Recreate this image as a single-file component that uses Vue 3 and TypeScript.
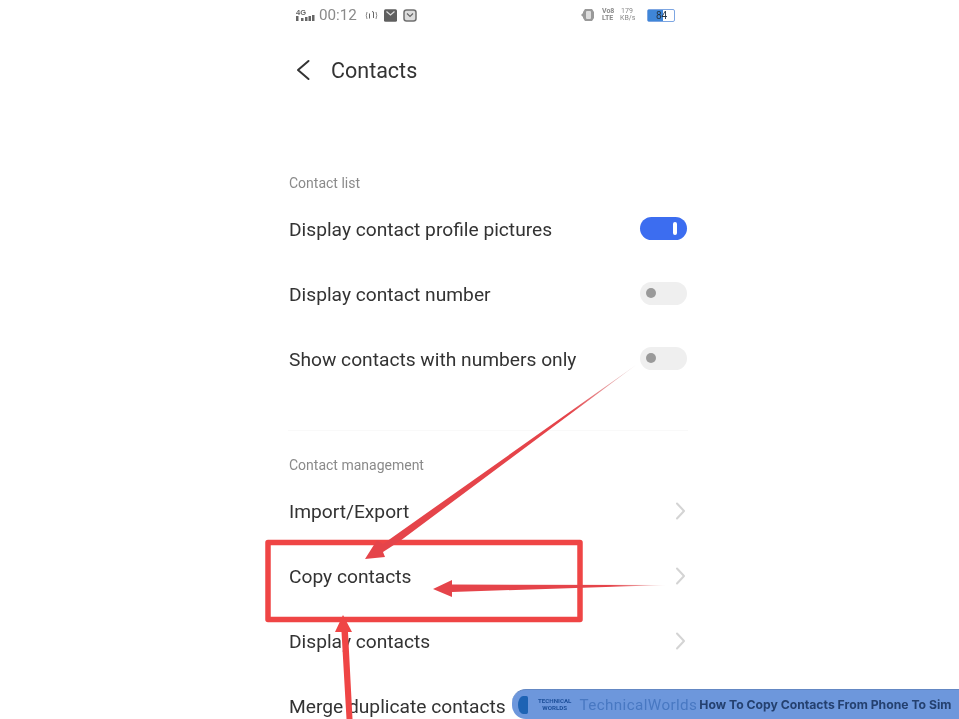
<script setup lang="ts">
interface Row { label: string; control: 'on' | 'off' | 'chevron' | 'none' }
const listRows: Row[] = [
  { label: 'Display contact profile pictures', control: 'on' },
  { label: 'Display contact number', control: 'off' },
  { label: 'Show contacts with numbers only', control: 'off' },
]
const manageRows: Row[] = [
  { label: 'Import/Export', control: 'chevron' },
  { label: 'Copy contacts', control: 'chevron' },
  { label: 'Display contacts', control: 'chevron' },
  { label: 'Merge duplicate contacts', control: 'none' },
]
</script>

<template>
  <div class="page">
    <main class="phone">
      <div class="status">
        <div class="status-left">
          <svg class="signal" width="19" height="14" viewBox="0 0 19 14">
            <text x="0" y="6.500" class="tiny bold">4G</text>
            <rect x="0" y="8" width="2.500" height="5" fill="#666" />
            <rect x="5" y="10" width="2.500" height="3" fill="#666" />
            <rect x="9" y="9" width="2.500" height="4" fill="#666" />
            <rect x="12.500" y="8" width="2.500" height="5" fill="#666" />
            <rect x="16" y="7" width="2.500" height="6" fill="#666" />
          </svg>
          <span class="time">00:12</span>
          <svg class="nfc" width="13" height="13" viewBox="0 0 13 13" fill="none" stroke="#8a8a8a" stroke-width="1">
            <path d="M2 3Q0.500 6.500 2 10M11 3Q12.500 6.500 11 10" />
            <path d="M4.500 4.500V9.500M7 2.500L8.500 3V9" stroke="#666" />
          </svg>
          <svg class="mail" width="13" height="13" viewBox="0 0 13 13">
            <rect width="13" height="12.500" y="0.250" rx="1.500" fill="#5f5f5f" />
            <path d="M2.500 2.500l4 3.500 4-3.500" fill="none" stroke="#ddd" stroke-width="1.200" />
          </svg>
          <svg class="mail" width="14" height="13" viewBox="0 0 14 13">
            <rect x="1" y="1" width="12" height="11" rx="2.500" fill="#ddd" stroke="#707070" stroke-width="1.500" />
            <path d="M4 4.500l3 3 3-3" fill="none" stroke="#666" stroke-width="1.200" />
          </svg>
        </div>
        <div class="status-right">
          <svg width="15" height="14" viewBox="0 0 15 14">
            <path d="M4 1h7l2 3v6l-2 3H4l-2-3V4z" fill="#999" />
            <path d="M0 7l2-2v4z" fill="#999" />
            <rect x="5" y="3" width="5" height="8" rx="1" fill="#ddd" />
          </svg>
          <span class="net-a">Vo8<br />LTE</span>
          <span class="net-b">179<br />KB/s</span>
          <div class="battery"><div class="battery-fill"></div><span class="battery-num">84</span></div>
        </div>
      </div>

      <header class="title-bar">
        <svg width="14" height="22" viewBox="0 0 14 22" fill="none" stroke="#333" stroke-width="2" stroke-linecap="round" stroke-linejoin="round">
          <path d="M12.500 2L2 11l10.500 9" />
        </svg>
        <h1>Contacts</h1>
      </header>

      <section class="group first">
        <h2>Contact list</h2>
        <div v-for="r in listRows" :key="r.label" class="row">
          <span>{{ r.label }}</span>
          <div class="toggle" :class="r.control"><i></i></div>
        </div>
      </section>

      <section class="group second">
        <h2>Contact management</h2>
        <div v-for="r in manageRows" :key="r.label" class="row">
          <span>{{ r.label }}</span>
          <svg v-if="r.control === 'chevron'" class="chev" width="11" height="18" viewBox="0 0 11 18" fill="none" stroke="#d4d4d4" stroke-width="2" stroke-linecap="round" stroke-linejoin="round">
            <path d="M2 1.500L9 9l-7 7.500" />
          </svg>
        </div>
      </section>
    </main>

    <svg class="marks" width="959" height="719" viewBox="0 0 959 719">
      <defs>
        <linearGradient id="fadeA" gradientUnits="userSpaceOnUse" x1="636" y1="365" x2="570" y2="414">
          <stop offset="0" stop-color="#e8dcdc" />
          <stop offset="1" stop-color="#e5444a" />
        </linearGradient>
        <linearGradient id="fadeB" gradientUnits="userSpaceOnUse" x1="666" y1="585" x2="610" y2="586">
          <stop offset="0" stop-color="#f3e3e3" />
          <stop offset="1" stop-color="#e5444a" />
        </linearGradient>
      </defs>
      <rect x="268" y="542.500" width="312" height="77" fill="none" stroke="#ef4545" stroke-width="5.500" stroke-linejoin="round" />
      <path d="M636 365L400 541 383 552 385 557 365 559 377 540 383 544 z" fill="url(#fadeA)" />
      <path d="M666 585L452 592 452 597 433 589 452 580 452 584.500z" fill="url(#fadeB)" />
      <path d="M343 615L335 632 341.500 632 346.500 719 352.500 719 348 632 352 632z" fill="#ef4545" />
    </svg>

    <aside class="banner">
      <span class="blob"></span>
      <span class="logo">TECHNICAL<br />WORLDS</span>
      <span class="brand">TechnicalWorlds</span>
      <span class="headline">How To Copy Contacts From Phone To Sim</span>
    </aside>
  </div>
</template>

<style>
body { margin: 0; background: #fff; }
</style>

<style scoped>
.page {
  position: relative;
  width: 959px;
  height: 719px;
  overflow: hidden;
  background: #fff;
  font-family: Roboto, "Liberation Sans", sans-serif;
}
.phone {
  width: 399px;
  margin-left: 289px;
  filter: blur(0.45px);
}
.status {
  height: 30px;
  display: flex;
  align-items: center;
  justify-content: space-between;
  margin-left: 7px;
  margin-right: 13px;
}
.status-left, .status-right { display: flex; align-items: center; }
.status-left { gap: 4px; }
.tiny { font-size: 7.500px; fill: #666; font-family: "Liberation Sans", sans-serif; }
.bold { font-weight: 700; }
.time { font-size: 15.200px; color: #8a8a8a; }
.nfc { margin-left: 4px; }
.mail { margin-left: 2px; }
.status-right > svg { margin-right: 6px; }
.net-a, .net-b { font-size: 7px; line-height: 7.500px; color: #888; text-align: center; }
.net-a { font-weight: 700; width: 11px; margin-right: 7px; white-space: nowrap; }
.net-b { width: 14px; margin-right: 13px; white-space: nowrap; }
.battery {
  position: relative;
  box-sizing: border-box;
  width: 28px;
  height: 13px;
  border: 1px solid #7da6e2;
  border-radius: 2px;
  display: flex;
}
.battery-fill { width: 15px; background: #3f86d8; }
.battery-num { position: absolute; left: 8px; top: 0; font-size: 10px; line-height: 11px; color: #234; }
.title-bar {
  height: 40px;
  margin-top: 20px;
  display: flex;
  align-items: center;
  gap: 21px;
  padding-left: 7px;
}
.title-bar h1 { margin: 0; font-size: 21.500px; font-weight: 400; color: #333; }
.group h2 { margin: 0 0 4px; font-size: 14px; line-height: 20px; font-weight: 400; color: #8a8a8a; }
.first { padding-top: 83px; }
.second { margin-top: 38px; padding-top: 24px; border-top: 1px solid #f9f9f9; margin-left: -1px; padding-left: 1px; }
.row {
  height: 65px;
  display: flex;
  align-items: center;
  justify-content: space-between;
  font-size: 19.200px;
  color: #333;
}
.row span { margin-top: -1px; }
.toggle {
  width: 47px;
  height: 23px;
  margin-top: -3px;
  margin-right: 1px;
  border-radius: 12px;
  background: #efefef;
  position: relative;
}
.toggle i {
  position: absolute;
  left: 6px;
  top: 6.500px;
  width: 10px;
  height: 10px;
  border-radius: 50%;
  background: #9a9a9a;
}
.toggle.on { background: #3c6df0; }
.toggle.on i {
  left: 33px;
  top: 5px;
  width: 4px;
  height: 13px;
  border-radius: 2px;
  background: #fff;
}
.chev { margin-right: 2px; margin-top: -2px; }
.marks { position: absolute; left: 0; top: 0; }
.banner {
  position: absolute;
  left: 512px;
  right: 0;
  bottom: 0;
  height: 29px;
  background: #6d97dc;
  border-top: 1px solid #6488c4;
  border-radius: 14px 0 0 14px;
  display: flex;
  align-items: center;
  filter: blur(0.5px);
}
.blob {
  width: 10px;
  height: 18px;
  margin-left: 6px;
  background: #1e63b4;
  border-radius: 60% 2px 2px 60%;
}
.logo {
  margin-left: 10px;
  font-size: 6.200px;
  line-height: 6.500px;
  font-weight: 700;
  color: #1c4f9a;
  text-align: center;
}
.brand { margin-left: 8px; font-size: 15.200px; color: #4878c2; letter-spacing: 0.4px; }
.headline { margin-left: 2px; font-size: 12.200px; font-weight: 700; color: #24406f; font-family: Inter, sans-serif; white-space: nowrap; }
</style>
